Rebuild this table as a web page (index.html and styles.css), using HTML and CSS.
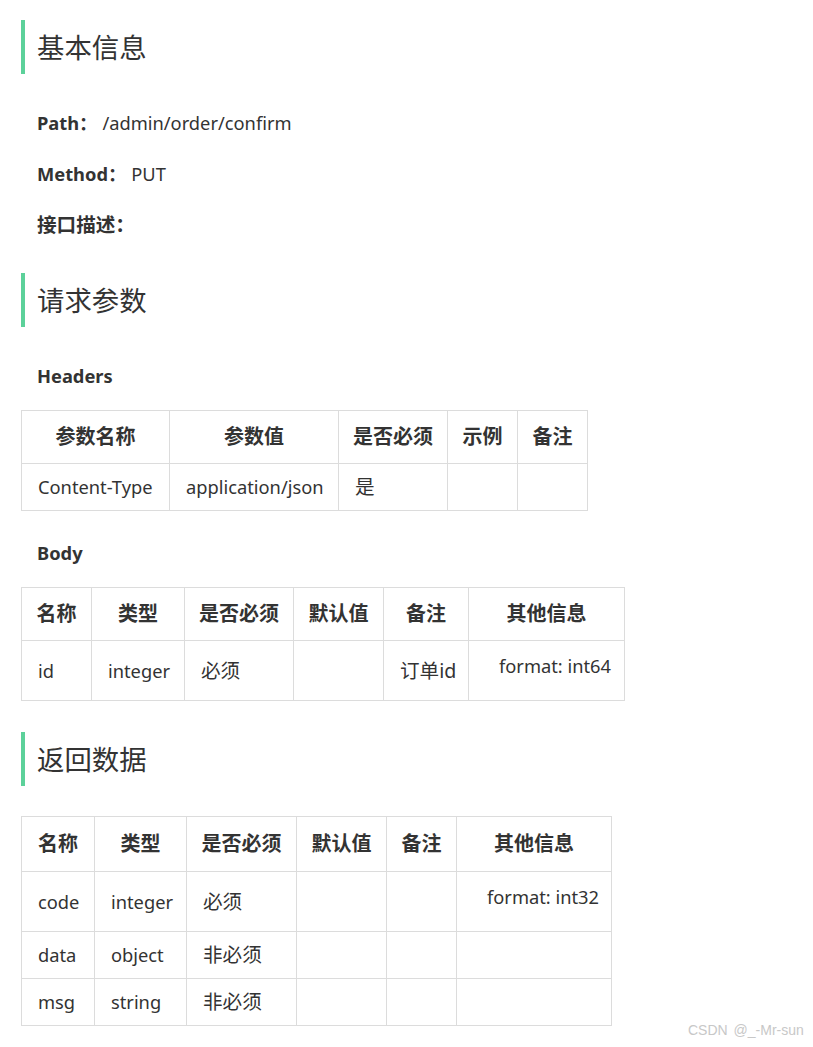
FILE: index.html
```html
<!DOCTYPE html>
<html lang="zh-CN">
<head>
<meta charset="utf-8">
<title>接口文档</title>
<link rel="stylesheet" href="styles.css">
</head>
<body>
<main class="doc">
  <h2 class="sec sec-first">基本信息</h2>
  <p class="field"><b>Path：</b><span class="val">/admin/order/confirm</span></p>
  <p class="field"><b>Method：</b><span class="val">PUT</span></p>
  <p class="field field-last"><b class="zh">接口描述：</b></p>

  <h2 class="sec">请求参数</h2>
  <p class="label">Headers</p>
  <table class="tbl tbl-headers">
    <colgroup><col class="c1"><col class="c2"><col class="c3"><col class="c4"><col class="c5"></colgroup>
    <thead><tr><th>参数名称</th><th>参数值</th><th>是否必须</th><th>示例</th><th>备注</th></tr></thead>
    <tbody><tr><td>Content-Type</td><td>application/json</td><td class="zh">是</td><td></td><td></td></tr></tbody>
  </table>

  <p class="label label-body">Body</p>
  <table class="tbl tbl-body">
    <colgroup><col class="c1"><col class="c2"><col class="c3"><col class="c4"><col class="c5"><col class="c6"></colgroup>
    <thead><tr><th>名称</th><th>类型</th><th>是否必须</th><th>默认值</th><th>备注</th><th>其他信息</th></tr></thead>
    <tbody><tr><td>id</td><td>integer</td><td class="zh">必须</td><td></td><td class="zh">订单id</td><td class="other"><div class="fmt">format: int64</div></td></tr></tbody>
  </table>

  <h2 class="sec sec-ret">返回数据</h2>
  <table class="tbl tbl-ret">
    <colgroup><col class="c1"><col class="c2"><col class="c3"><col class="c4"><col class="c5"><col class="c6"></colgroup>
    <thead><tr><th>名称</th><th>类型</th><th>是否必须</th><th>默认值</th><th>备注</th><th>其他信息</th></tr></thead>
    <tbody>
      <tr><td>code</td><td>integer</td><td class="zh">必须</td><td></td><td></td><td class="other"><div class="fmt">format: int32</div></td></tr>
      <tr><td>data</td><td>object</td><td class="zh">非必须</td><td></td><td></td><td></td></tr>
      <tr><td>msg</td><td>string</td><td class="zh">非必须</td><td></td><td></td><td></td></tr>
    </tbody>
  </table>
</main>
<div class="watermark">CSDN @_-Mr-sun</div>
</body>
</html>
```
FILE: styles.css
```css
html, body {
  margin: 0;
  padding: 0;
  background: #fff;
}
body {
  font-family: "Noto Sans", "Noto Sans CJK SC", sans-serif;
  color: #333;
  font-size: 18.3px;
  width: 813px;
  height: 1047px;
  position: relative;
  overflow: hidden;
}
.doc {
  padding: 20px 0 0 21px;
}
.zh { font-size: 19.6px; }
.sec {
  margin: 0;
  border-left: 4px solid #5cd19a;
  padding-left: 12px;
  height: 54px;
  line-height: 56px;
  font-size: 27.4px;
  font-weight: normal;
  color: #333;
}
.sec-first { margin-bottom: 35px; }
.field {
  margin: 0 0 23px 16px;
  line-height: 28px;
  height: 28px;
}
.field b { font-weight: 700; }
.field .val { margin-left: 5px; }
.field-last { margin-bottom: 34px; }
.label {
  margin: 35px 0 20px 16px;
  line-height: 28px;
  font-weight: 700;
}
.label-body { margin-top: 28px; }
.sec-ret { margin-top: 31px; margin-bottom: 30px; }
.tbl {
  border-collapse: collapse;
  table-layout: fixed;
}
.tbl th, .tbl td {
  border: 1px solid #dcdcdc;
  padding: 0 0 0 16px;
  text-align: left;
  vertical-align: middle;
  line-height: 28px;
}
.tbl th {
  text-align: center;
  padding: 0;
  font-weight: 700;
  font-size: 20px;
  height: 52px;
}
.tbl td { height: 46px; }
.tbl-headers { width: 567px; }
.tbl-headers .c1 { width: 148px; }
.tbl-headers .c2 { width: 169px; }
.tbl-headers .c3 { width: 109px; }
.tbl-headers .c4 { width: 70px; }
.tbl-headers .c5 { width: 70px; }
.tbl-body { width: 604px; }
.tbl-body .c1 { width: 70px; }
.tbl-body .c2 { width: 93px; }
.tbl-body .c3 { width: 109px; }
.tbl-body .c4 { width: 90px; }
.tbl-body .c5 { width: 85px; }
.tbl-body .c6 { width: 156px; }
.tbl-ret { width: 591px; }
.tbl-ret .c1 { width: 73px; }
.tbl-ret .c2 { width: 92px; }
.tbl-ret .c3 { width: 110px; }
.tbl-ret .c4 { width: 90px; }
.tbl-ret .c5 { width: 70px; }
.tbl-ret .c6 { width: 155px; }
.tbl-ret thead th { height: 54px; }
.tbl td.other { vertical-align: top; padding-top: 11px; }
.fmt { padding-left: 14px; margin-bottom: 20px; white-space: nowrap; }
.watermark {
  position: absolute;
  left: 688px;
  top: 1022px;
  font-family: "Liberation Sans", sans-serif;
  font-size: 14px;
  color: #c8c8c8;
  word-spacing: 2px;
}
```
